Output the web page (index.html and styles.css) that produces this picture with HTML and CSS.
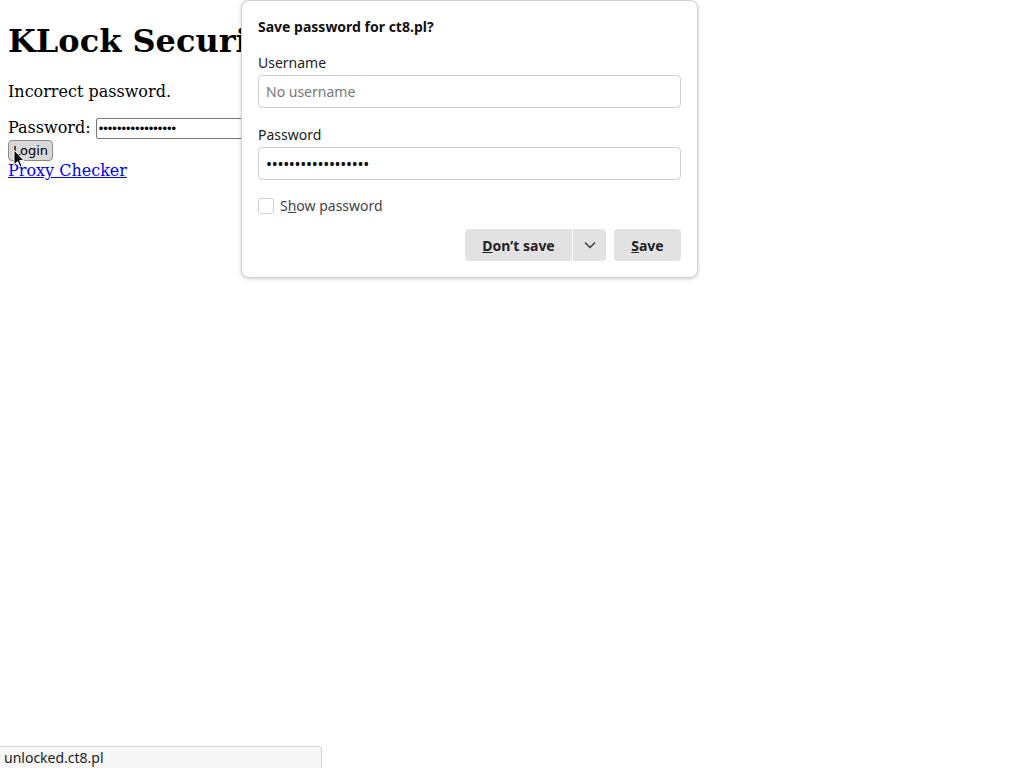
FILE: index.html
```html
<!DOCTYPE html>
<html>
<head>
<meta charset="utf-8">
<title>KLock Security</title>
<link rel="stylesheet" href="styles.css">
</head>
<body>
<h1 class="title">KLock Security</h1>
<p class="msg">Incorrect password.</p>
<form class="login">Password: <input class="pw" type="password" value="xxxxxxxxxxxxxxxxx"><br><button type="button" class="btn">Login</button></form>
<a class="link" href="#">Proxy Checker</a>

<svg class="cursor" width="12" height="19" viewBox="0 0 12 19"><path d="M1 1 L1 16 L4.5 12.5 L7 18 L9 17 L6.6 11.6 L11 11.6 Z" fill="#000" stroke="#fff" stroke-width="1"/></svg>

<div class="popup">
  <div class="ptitle">Save password for ct8.pl?</div>
  <div class="plabel">Username</div>
  <div class="pinput placeholder">No username</div>
  <div class="plabel">Password</div>
  <div class="pinput dots">••••••••••••••••••</div>
  <div class="check"><span class="box"></span><span>S<u>h</u>ow password</span></div>
  <div class="actions">
    <div class="split">
      <span class="pbtn dont"><u>D</u>on’t save</span>
      <span class="pbtn drop"><svg width="12" height="8" viewBox="0 0 12 8"><path d="M1 1.5 L6 6.5 L11 1.5" fill="none" stroke="#333" stroke-width="1.3"/></svg></span>
    </div>
    <span class="pbtn save"><u>S</u>ave</span>
  </div>
</div>

<div class="status">unlocked.ct8.pl</div>
</body>
</html>
```
FILE: styles.css
```css
html, body { background: #fff; }
body {
  margin: 8px;
  font-family: "DejaVu Serif", serif;
  font-size: 16px;
  color: #000;
}
.title { font-size: 32px; margin: 14px 0 22px 0; font-weight: bold; }
.msg { margin: 16px 0 17px 0; }
.login { margin: 0; }
.pw {
  width: 150px;
  height: 17px;
  border: 1px solid #767676;
  border-radius: 2px;
  padding: 1px 2px;
  font-size: 13px;
  vertical-align: baseline;
}
.btn {
  font-family: "DejaVu Sans", sans-serif;
  font-size: 13px;
  color: #000;
  background: #d8d8d8;
  border: 1px solid #8a8a8a;
  border-radius: 4px;
  padding: 1px 4px;
  height: 21px;
  margin: 1px 0 0 0;
}
.link { color: #0000ee; text-decoration: underline; }
.cursor { position: absolute; left: 13px; top: 149px; }

.popup {
  position: absolute;
  left: 241px;
  top: 0;
  width: 423px;
  padding: 16px 16px 16px 16px;
  background: #fff;
  border: 1px solid #d0d0d0;
  border-radius: 8px;
  box-shadow: 0 1px 4px rgba(0,0,0,0.18);
  font-family: "Noto Sans", "Open Sans", sans-serif;
  font-size: 14px;
  color: #222;
  display: flex;
  flex-direction: column;
}
.ptitle { font-weight: bold; font-size: 14px; line-height: 19px; margin-bottom: 17px; color: #111; }
.plabel { line-height: 19px; margin-bottom: 3px; color: #222; }
.pinput {
  height: 31px;
  border: 1px solid #cfcfcf;
  border-radius: 4px;
  padding: 0 7px;
  display: flex;
  align-items: center;
  margin-bottom: 17px;
}
.placeholder { color: #777; }
.dots { color: #111; font-size: 16px; letter-spacing: -0.3px; margin-bottom: 16px; }
.check { display: flex; align-items: center; gap: 6px; color: #444; line-height: 19px; margin-bottom: 14px; }
.box { width: 14px; height: 14px; border: 1px solid #cfcfcf; border-radius: 3px; background: #fff; }
.actions { display: flex; justify-content: flex-end; gap: 8px; }
.split { display: flex; gap: 1px; }
.pbtn {
  height: 32px;
  background: #e2e2e2;
  border-radius: 4px;
  display: flex;
  align-items: center;
  justify-content: center;
  font-weight: bold;
  color: #222;
}
.dont { width: 107px; border-radius: 4px 0 0 4px; }
.drop { width: 33px; border-radius: 0 4px 4px 0; }
.save { width: 67px; }

.status {
  position: fixed;
  left: 0;
  bottom: 0;
  width: 317px;
  height: 21px;
  padding-left: 4px;
  background: #f7f7f7;
  border-top: 1px solid #d4d4d4;
  border-right: 1px solid #d4d4d4;
  border-top-right-radius: 4px;
  font-family: "Noto Sans", "Open Sans", sans-serif;
  font-size: 14px;
  line-height: 21px;
  color: #222;
}
```
